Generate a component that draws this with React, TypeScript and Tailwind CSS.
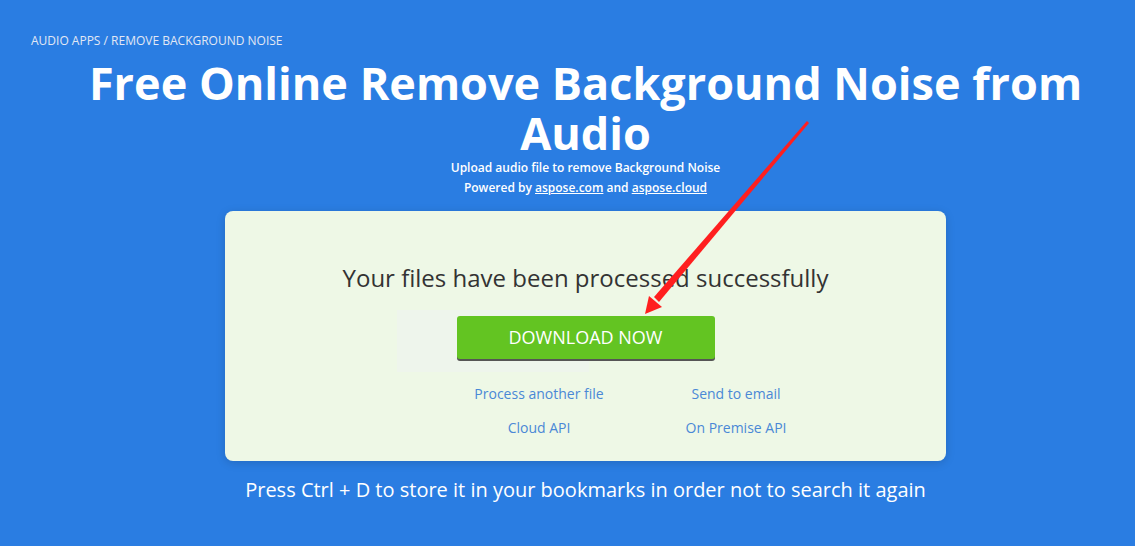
import React from "react";

const links = [
  ["Process another file", "Send to email"],
  ["Cloud API", "On Premise API"],
];

export default function App() {
  return (
    <div
      className="relative w-[1135px] h-[546px] overflow-hidden bg-[#2a7de2] text-white"
      style={{ fontFamily: '"Open Sans", sans-serif' }}
    >
      <div className="pt-[33px] pl-[31px] text-[12px] leading-[16px] text-[#e2e8f4] uppercase">
        Audio Apps / Remove Background Noise
      </div>

      <div className="pl-[36px] flex flex-col items-center">
        <h1 className="w-[1040px] text-center font-bold text-[45px] leading-[50px] mt-[9px]">
          Free Online Remove Background Noise from Audio
        </h1>
        <p className="mt-[2px] text-[12px] leading-[16px] font-semibold">
          Upload audio file to remove Background Noise
        </p>
        <p className="mt-[4px] text-[12px] leading-[16px] font-semibold">
          Powered by <a className="underline">aspose.com</a> and{" "}
          <a className="underline">aspose.cloud</a>
        </p>

        {/* result card */}
        <div className="relative mt-[15px] w-[721px] h-[250px] rounded-lg bg-[#eef8e6] shadow-[0_2px_10px_rgba(0,0,0,0.15)] flex flex-col items-center pt-[51px]">
          <div className="absolute left-[172px] top-[99px] w-[192px] h-[62px] bg-[#eef5ec]" />
          <div className="text-[24px] leading-[32px] text-[#333]">
            Your files have been processed successfully
          </div>
          <button className="relative mt-[22px] w-[258px] h-[43px] rounded-[3px] bg-[#63c422] text-white text-[18px] shadow-[0_2px_0_#555] uppercase">
            Download now
          </button>
          <div className="self-start ml-[217px] mt-[25px] grid grid-cols-[194px_194px] gap-x-[3px] gap-y-[14px] text-[14px] leading-[20px] text-[#4a88d6]">
            {links.map((row, i) => (
              <React.Fragment key={i}>
                <a className="text-center">{row[0]}</a>
                <a className="text-center">{row[1]}</a>
              </React.Fragment>
            ))}
          </div>
        </div>

        <p className="mt-[15px] text-[20px] leading-[28px]">
          Press Ctrl + D to store it in your bookmarks in order not to search it again
        </p>
      </div>

      {/* red annotation arrow */}
      <svg className="absolute left-0 top-0 pointer-events-none" width="1135" height="546">
        <polygon points="807,121 809,123 659,302 654,297" fill="#ff1f1f" />
        <polygon points="645,314 649,296 662,307" fill="#ff1f1f" />
      </svg>
    </div>
  );
}
